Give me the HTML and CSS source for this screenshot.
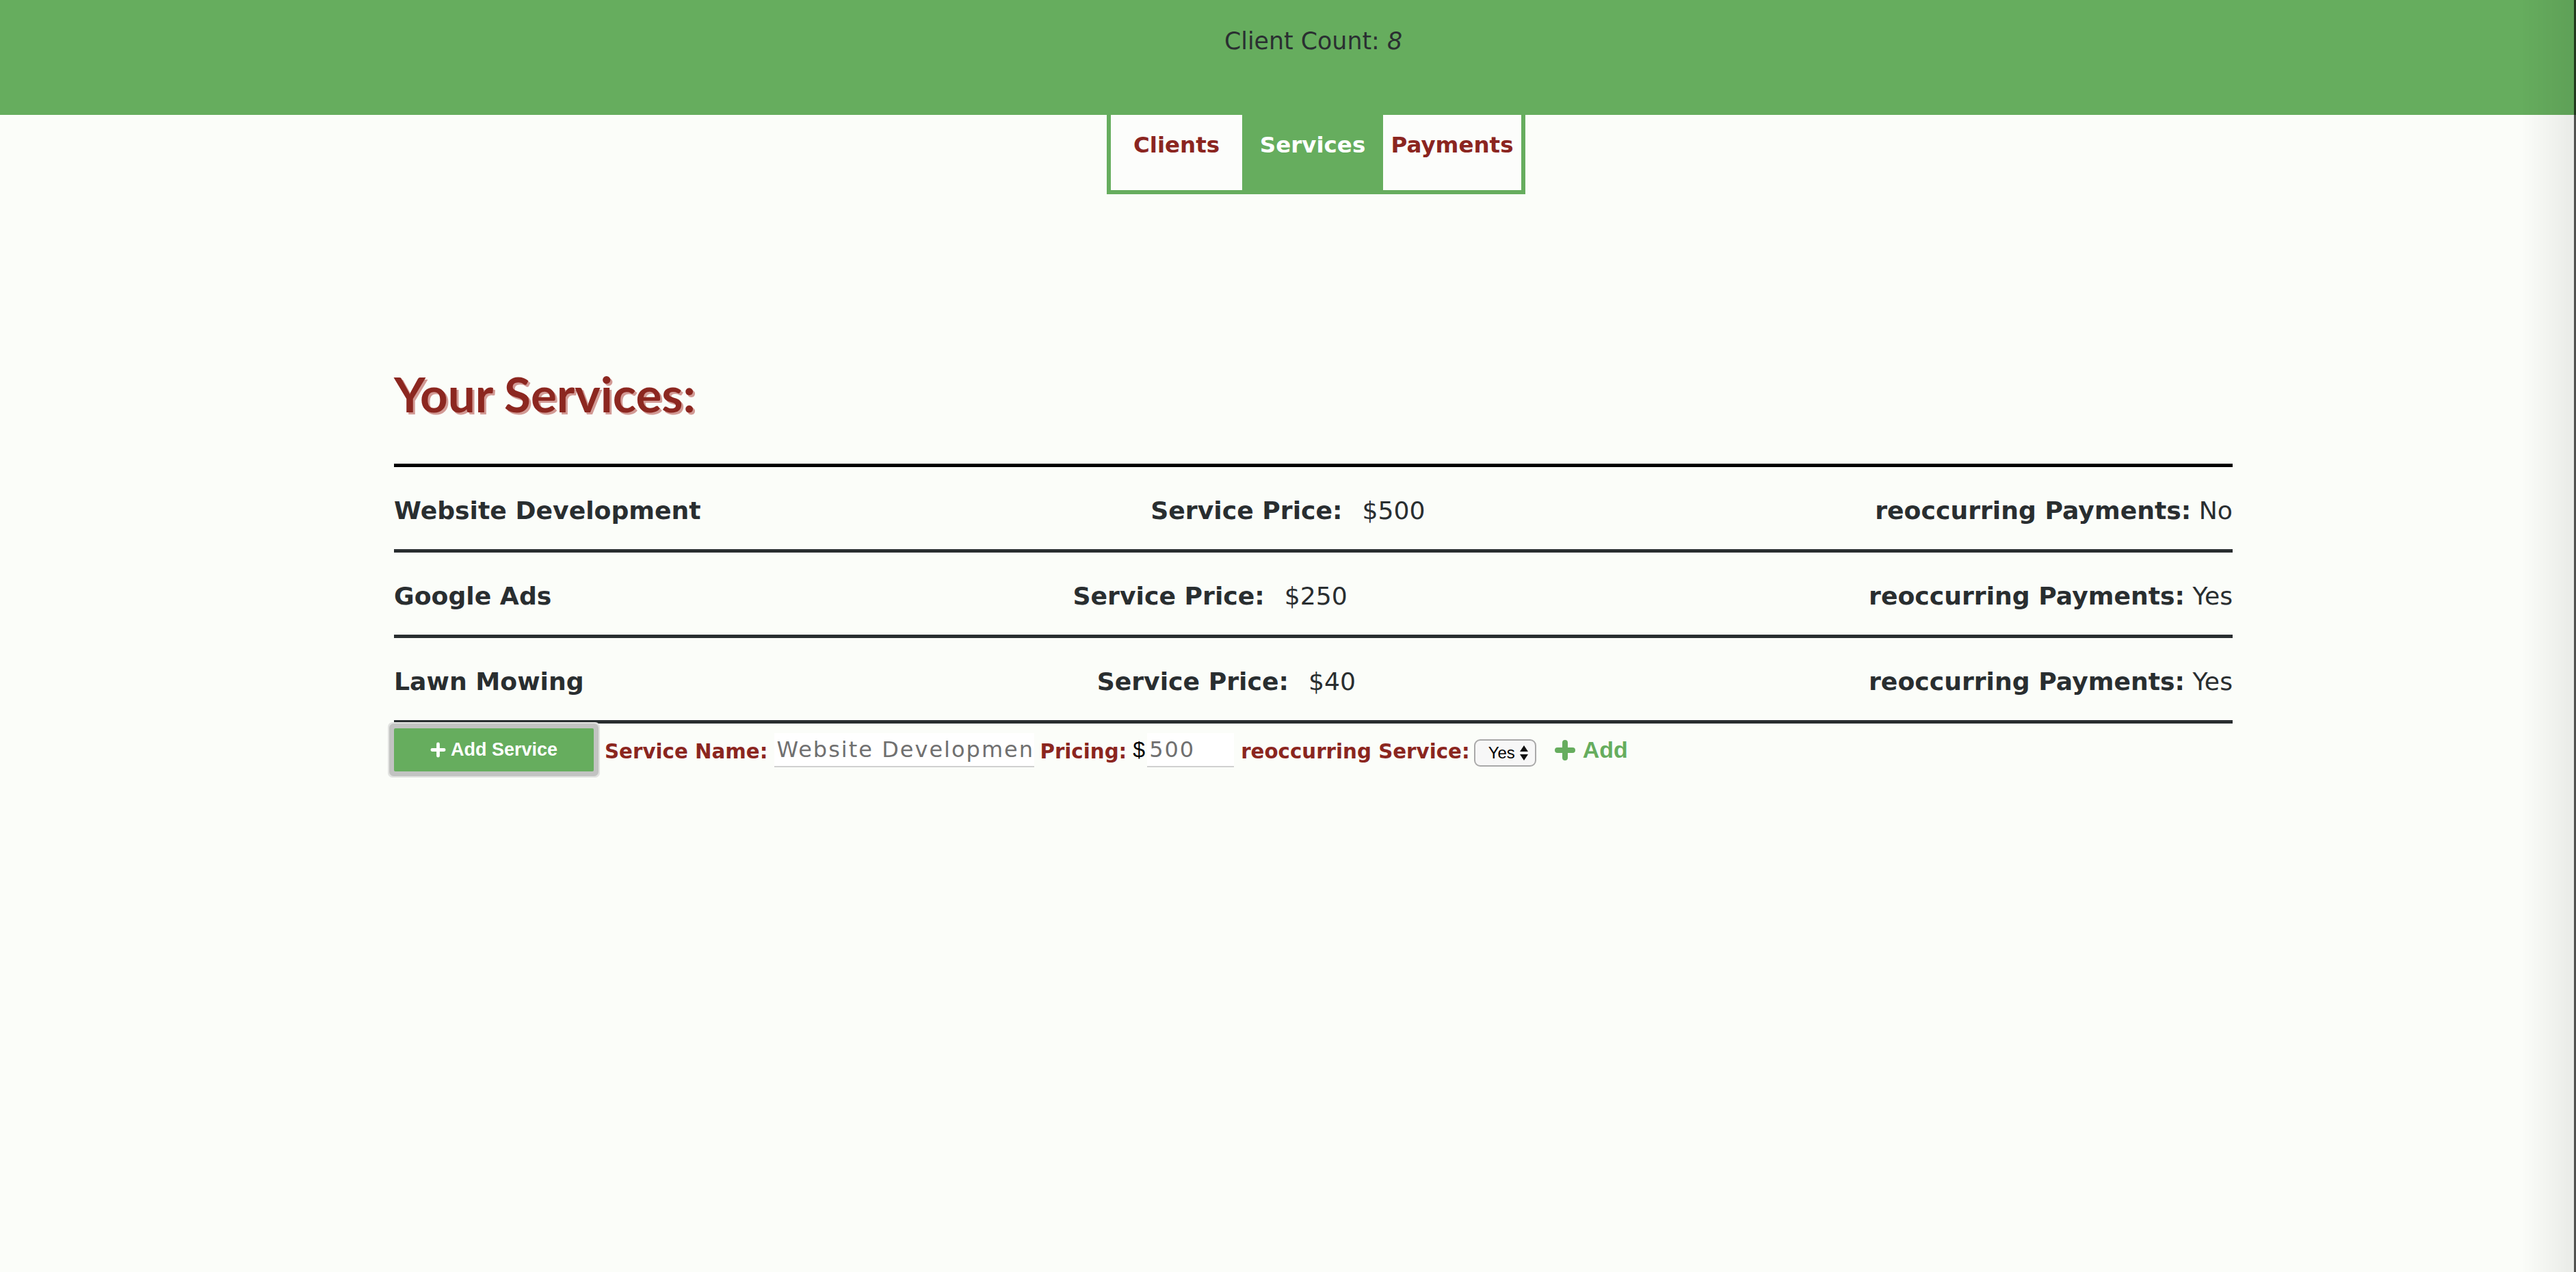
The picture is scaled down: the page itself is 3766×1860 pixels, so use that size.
FILE: index.html
```html
<!DOCTYPE html>
<html lang="en">
<head>
<meta charset="utf-8">
<title>Services</title>
<link rel="stylesheet" href="styles.css">
</head>
<body>
<div class="page">
  <header class="topbar">
    <p class="count">Client Count: <em>8</em></p>
  </header>
  <nav class="tabs">
    <a class="tab tab-clients">Clients</a>
    <a class="tab tab-services active">Services</a>
    <a class="tab tab-payments">Payments</a>
  </nav>
  <main class="content">
    <h1 class="title">Your Services:</h1>
    <ul class="services">
      <li class="service">
        <span class="name">Website Development</span>
        <span class="price"><b>Service Price:</b><span class="val">$500</span></span>
        <span class="recur"><b>reoccurring Payments:</b> No</span>
      </li>
      <li class="service">
        <span class="name">Google Ads</span>
        <span class="price"><b>Service Price:</b><span class="val">$250</span></span>
        <span class="recur"><b>reoccurring Payments:</b> Yes</span>
      </li>
      <li class="service">
        <span class="name">Lawn Mowing</span>
        <span class="price"><b>Service Price:</b><span class="val">$40</span></span>
        <span class="recur"><b>reoccurring Payments:</b> Yes</span>
      </li>
    </ul>
    <form class="add-form">
      <button type="button" class="add-btn">
        <svg class="btn-plus" viewBox="0 0 24 24" width="23" height="23"><path d="M12 3v18M3 12h18" stroke="#fff" stroke-width="5" stroke-linecap="round" fill="none"/></svg>
        <span>Add Service</span>
      </button>
      <label class="lbl lbl-name">Service Name:</label>
      <input class="field field-name" type="text" value="Website Development">
      <label class="lbl lbl-pricing">Pricing:</label>
      <span class="dollar">$</span>
      <input class="field field-price" type="text" value="500">
      <label class="lbl lbl-recur">reoccurring Service:</label>
      <span class="select-wrap">
        <select class="select"><option>Yes</option><option>No</option></select>
        <svg class="select-arrows" viewBox="0 0 12 22" width="12" height="22"><path d="M0 9L6 0L12 9Z M0 13L6 22L12 13Z" fill="#111"/></svg>
      </span>
      <a class="add-link">
        <svg class="add-plus" viewBox="0 0 30 30" width="30" height="30"><path d="M15 4v22M4 15h22" stroke="#66ad5e" stroke-width="8" stroke-linecap="round" fill="none"/></svg>
        <span>Add</span>
      </a>
    </form>
  </main>
</div>
<div class="edge"></div>
</body>
</html>
```

FILE: styles.css
```css
html, body {
  margin: 0;
  padding: 0;
  overflow: hidden;
  background: #fbfdf9;
}

.page {
  width: 3840px;
  min-height: 1860px;
  font-family: "DejaVu Sans", sans-serif;
  color: #292e30;
}

.topbar {
  background: #66ad5e;
  height: 168px;
  text-align: center;
}

.count {
  margin: 0;
  padding-top: 43px;
  font-size: 34.8px;
  line-height: 1;
  font-weight: 400;
  color: #2a2f31;
}

.tabs {
  display: flex;
  width: max-content;
  margin-left: calc(50% - 302px);
  border: 6px solid #66ad5e;
  border-top: 0;
}

.tab {
  height: 110px;
  box-sizing: border-box;
  padding-top: 28px;
  text-align: center;
  font-size: 32.5px;
  line-height: 1;
  font-weight: 700;
  color: #8b2520;
  background: #fcfdfb;
}

.tab-clients { width: 192px; }
.tab-services { width: 206px; }
.tab-payments { width: 202px; }

.tab.active {
  background: #66ad5e;
  color: #ffffff;
}

.content {
  width: 70%;
  margin: 0 auto;
}

.title {
  margin: 249px 0 60px;
  font-family: "Lato", sans-serif;
  font-weight: 700;
  font-size: 71px;
  line-height: 1.2;
  color: #8c2720;
  text-shadow: 3px 3px 0 #d29a95;
}

.services {
  list-style: none;
  margin: 0;
  padding: 0;
  border-top: 5px solid #000;
}

.service {
  display: flex;
  justify-content: space-between;
  align-items: center;
  height: 125px;
  box-sizing: border-box;
  padding-top: 7px;
  border-bottom: 5px solid #292e30;
  font-size: 36.2px;
  font-weight: 400;
}

.service b,
.name {
  font-weight: 700;
}

.price .val {
  margin-left: 29px;
}

.add-form {
  display: flex;
  align-items: center;
  margin-top: 7px;
}

.add-btn {
  display: flex;
  align-items: center;
  justify-content: center;
  gap: 7px;
  width: 292px;
  height: 63px;
  padding: 0;
  border: 0;
  border-radius: 2px;
  background: #66ad5e;
  color: #ffffff;
  font-family: "Liberation Sans", Arial, sans-serif;
  font-weight: 700;
  font-size: 27px;
  box-shadow: 0 0 0 7px #c2c3c2, 0 0 0 9px #e2e3e1;
}

.lbl {
  font-weight: 700;
  font-size: 29.3px;
  line-height: 1;
  color: #8b261f;
  margin-top: 5px;
}

.lbl-name { margin-left: 16px; }
.lbl-pricing { margin-left: 8px; }
.lbl-recur { margin-left: 10px; }

.field {
  height: 50px;
  box-sizing: border-box;
  border: 0;
  border-bottom: 2px solid #d0d0d0;
  background: #ffffff;
  padding: 0 3px;
  font-family: "DejaVu Sans", sans-serif;
  font-size: 32px;
  letter-spacing: 2px;
  color: #707070;
  outline: none;
}

.field-name {
  width: 380px;
  margin-left: 10px;
}

.field-price {
  width: 127px;
  margin-left: 3px;
}

.dollar {
  margin-left: 9px;
  font-family: "Liberation Sans", Arial, sans-serif;
  font-size: 32px;
  color: #000;
}

.select-wrap {
  position: relative;
  display: inline-block;
  margin-left: 6px;
  margin-top: 8px;
  height: 40px;
}

.select {
  appearance: none;
  -webkit-appearance: none;
  width: 91px;
  height: 40px;
  box-sizing: border-box;
  border: 2px solid #a9a9a9;
  border-radius: 9px;
  background: #f7f7f7;
  padding: 0 0 0 19px;
  font-family: "Liberation Sans", Arial, sans-serif;
  font-size: 24px;
  color: #000;
}

.select-arrows {
  position: absolute;
  left: 67px;
  top: 9px;
  pointer-events: none;
}

.add-link {
  display: flex;
  align-items: center;
  gap: 11px;
  margin-left: 27px;
  color: #66ad5e;
  font-family: "Liberation Sans", Arial, sans-serif;
  font-weight: 700;
  font-size: 34px;
}

.edge {
  position: fixed;
  top: 0;
  right: 0;
  bottom: 0;
  width: 80px;
  pointer-events: none;
  background: linear-gradient(to right, rgba(0, 0, 0, 0) 0, rgba(0, 0, 0, 0.07) calc(100% - 3px), rgba(0, 0, 0, 0.68) calc(100% - 3px));
}
```
